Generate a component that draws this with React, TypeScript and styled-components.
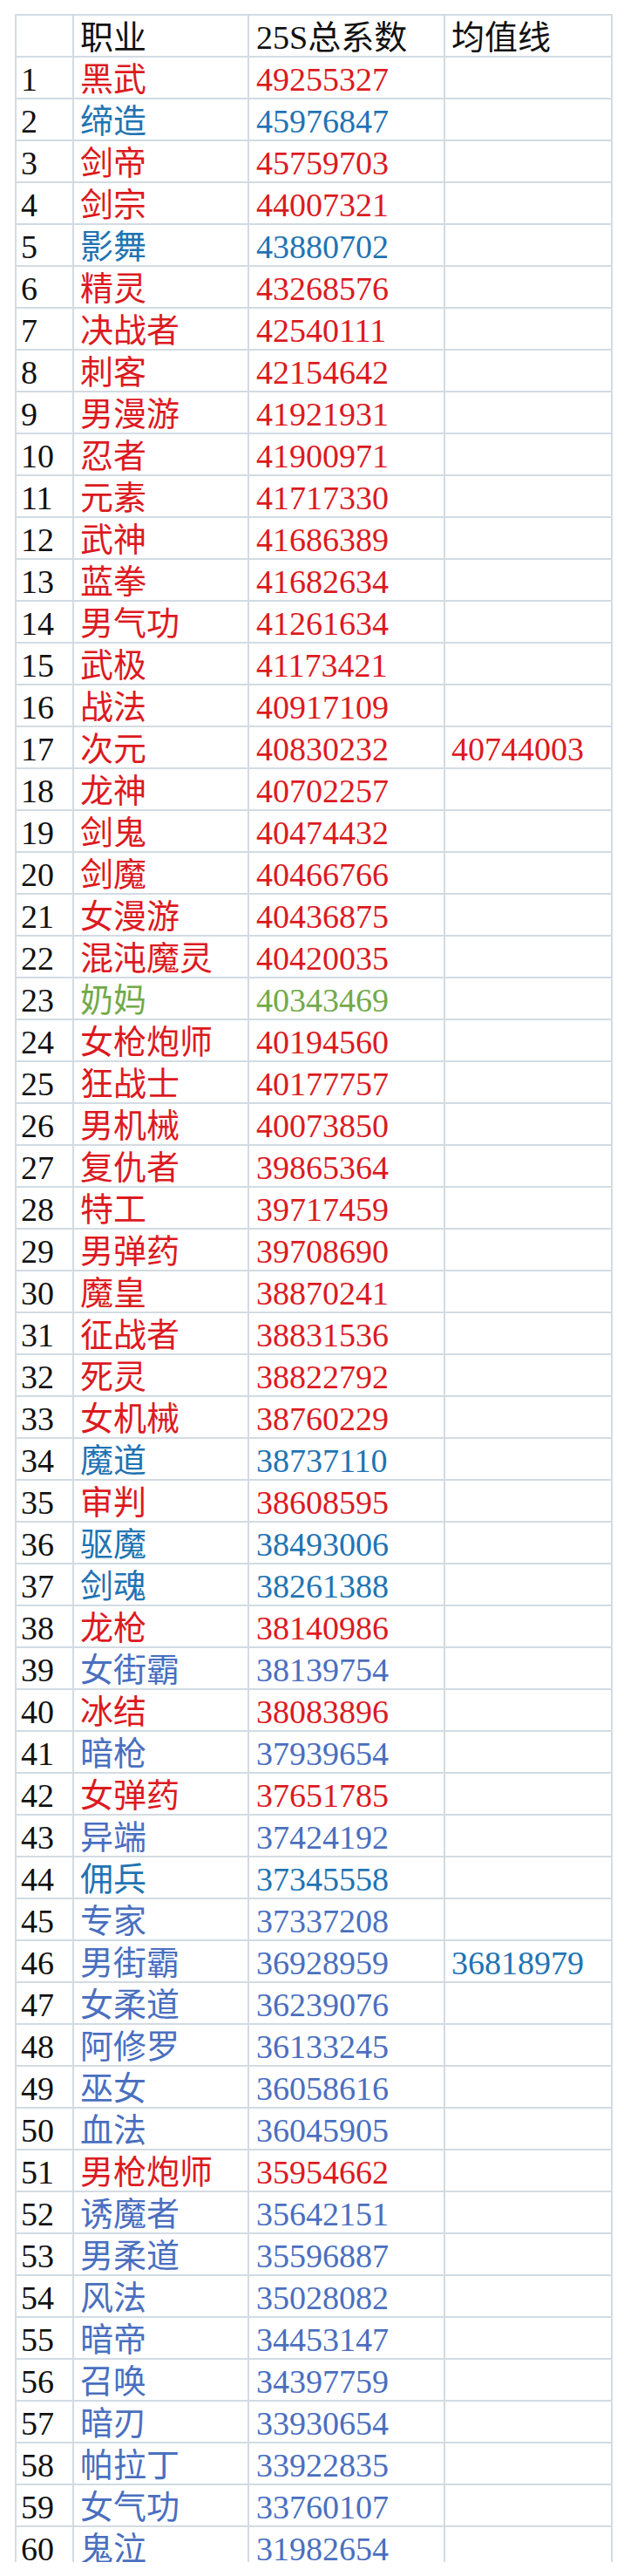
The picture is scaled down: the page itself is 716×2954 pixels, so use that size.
import { Fragment } from "react";
import styled, { createGlobalStyle } from "styled-components";

type Tone = "red" | "teal" | "slate" | "green" | "black";

const tones: Record<Tone, string> = {
  red: "#dc1a1f",
  teal: "#1f74b3",
  slate: "#4a6fbf",
  green: "#72aa4a",
  black: "#111111",
};

type Row = { name: string; total: string; tone: Tone; avg?: string; avgTone?: Tone };

const rows: Row[] = [
  { name: "黑武", total: "49255327", tone: "red" },
  { name: "缔造", total: "45976847", tone: "teal" },
  { name: "剑帝", total: "45759703", tone: "red" },
  { name: "剑宗", total: "44007321", tone: "red" },
  { name: "影舞", total: "43880702", tone: "teal" },
  { name: "精灵", total: "43268576", tone: "red" },
  { name: "决战者", total: "42540111", tone: "red" },
  { name: "刺客", total: "42154642", tone: "red" },
  { name: "男漫游", total: "41921931", tone: "red" },
  { name: "忍者", total: "41900971", tone: "red" },
  { name: "元素", total: "41717330", tone: "red" },
  { name: "武神", total: "41686389", tone: "red" },
  { name: "蓝拳", total: "41682634", tone: "red" },
  { name: "男气功", total: "41261634", tone: "red" },
  { name: "武极", total: "41173421", tone: "red" },
  { name: "战法", total: "40917109", tone: "red" },
  { name: "次元", total: "40830232", tone: "red", avg: "40744003", avgTone: "red" },
  { name: "龙神", total: "40702257", tone: "red" },
  { name: "剑鬼", total: "40474432", tone: "red" },
  { name: "剑魔", total: "40466766", tone: "red" },
  { name: "女漫游", total: "40436875", tone: "red" },
  { name: "混沌魔灵", total: "40420035", tone: "red" },
  { name: "奶妈", total: "40343469", tone: "green" },
  { name: "女枪炮师", total: "40194560", tone: "red" },
  { name: "狂战士", total: "40177757", tone: "red" },
  { name: "男机械", total: "40073850", tone: "red" },
  { name: "复仇者", total: "39865364", tone: "red" },
  { name: "特工", total: "39717459", tone: "red" },
  { name: "男弹药", total: "39708690", tone: "red" },
  { name: "魔皇", total: "38870241", tone: "red" },
  { name: "征战者", total: "38831536", tone: "red" },
  { name: "死灵", total: "38822792", tone: "red" },
  { name: "女机械", total: "38760229", tone: "red" },
  { name: "魔道", total: "38737110", tone: "teal" },
  { name: "审判", total: "38608595", tone: "red" },
  { name: "驱魔", total: "38493006", tone: "teal" },
  { name: "剑魂", total: "38261388", tone: "teal" },
  { name: "龙枪", total: "38140986", tone: "red" },
  { name: "女街霸", total: "38139754", tone: "slate" },
  { name: "冰结", total: "38083896", tone: "red" },
  { name: "暗枪", total: "37939654", tone: "slate" },
  { name: "女弹药", total: "37651785", tone: "red" },
  { name: "异端", total: "37424192", tone: "slate" },
  { name: "佣兵", total: "37345558", tone: "teal" },
  { name: "专家", total: "37337208", tone: "slate" },
  { name: "男街霸", total: "36928959", tone: "slate", avg: "36818979", avgTone: "teal" },
  { name: "女柔道", total: "36239076", tone: "slate" },
  { name: "阿修罗", total: "36133245", tone: "slate" },
  { name: "巫女", total: "36058616", tone: "slate" },
  { name: "血法", total: "36045905", tone: "slate" },
  { name: "男枪炮师", total: "35954662", tone: "red" },
  { name: "诱魔者", total: "35642151", tone: "slate" },
  { name: "男柔道", total: "35596887", tone: "slate" },
  { name: "风法", total: "35028082", tone: "slate" },
  { name: "暗帝", total: "34453147", tone: "slate" },
  { name: "召唤", total: "34397759", tone: "slate" },
  { name: "暗刃", total: "33930654", tone: "slate" },
  { name: "帕拉丁", total: "33922835", tone: "slate" },
  { name: "女气功", total: "33760107", tone: "slate" },
  { name: "鬼泣", total: "31982654", tone: "slate" },
];

const GlobalStyle = createGlobalStyle`
  html, body { margin: 0; padding: 0; background: #ffffff; }
`;

const Page = styled.div`
  width: 716px;
  height: 2954px;
  padding: 16px 0 0 17px;
  box-sizing: border-box;
  background: #ffffff;
`;

const Sheet = styled.div`
  width: 686px;
  height: 2922px;
  overflow: hidden;
  display: grid;
  grid-template-columns: 66px 201px 225px 192px;
  grid-auto-rows: 48px;
  border-left: 2px solid #d3dbe2;
  border-top: 2px solid #d3dbe2;
  box-sizing: border-box;
`;

const Cell = styled.div<{ $tone: Tone; $pad?: number }>`
  border-right: 2px solid #d3dbe2;
  border-bottom: 2px solid #d3dbe2;
  box-sizing: border-box;
  display: flex;
  align-items: center;
  padding: 3px 0 0 ${(p) => p.$pad ?? 5}px;
  color: ${(p) => tones[p.$tone]};
  font-family: "Liberation Serif", "Noto Sans CJK SC", serif;
  font-size: 38px;
  line-height: 1;
  white-space: nowrap;
  overflow: hidden;
`;

const Text = styled.span`
  display: inline-block;
`;

export default function App() {
  return (
    <>
      <GlobalStyle />
      <Page>
        <Sheet>
          <Cell $tone="black" />
          <Cell $tone="black" $pad={7}><Text>职业</Text></Cell>
          <Cell $tone="black" $pad={8}><Text>25S总系数</Text></Cell>
          <Cell $tone="black" $pad={7}><Text>均值线</Text></Cell>
          {rows.map((r, i) => (
            <Fragment key={i}>
              <Cell $tone="black"><Text>{i + 1}</Text></Cell>
              <Cell $tone={r.tone} $pad={7}><Text>{r.name}</Text></Cell>
              <Cell $tone={r.tone} $pad={8}><Text>{r.total}</Text></Cell>
              <Cell $tone={r.avgTone ?? "black"} $pad={7}>
                {r.avg && <Text>{r.avg}</Text>}
              </Cell>
            </Fragment>
          ))}
        </Sheet>
      </Page>
    </>
  );
}
